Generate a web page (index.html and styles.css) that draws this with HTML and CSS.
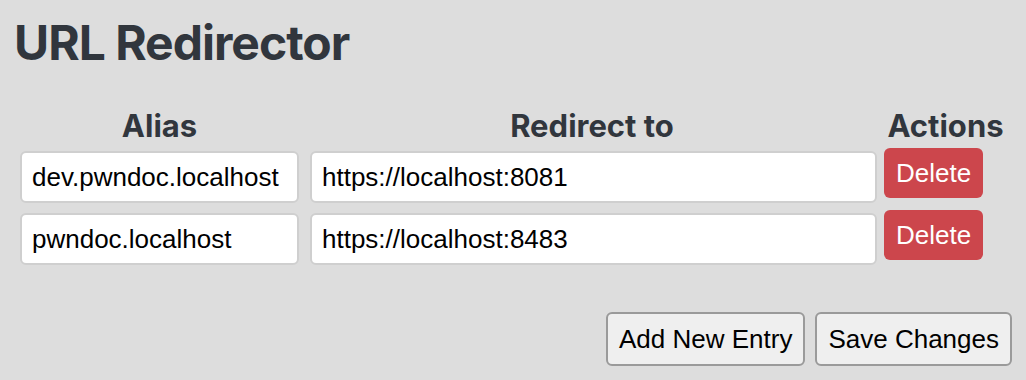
FILE: index.html
```html
<!DOCTYPE html>
<html lang="en">
<head>
<meta charset="UTF-8">
<meta name="viewport" content="width=device-width, initial-scale=1.0">
<title>URL Redirector</title>
<link rel="stylesheet" href="styles.css">
</head>
<body>

<h1>URL Redirector</h1>

<table id="tablaRedirects">
    <colgroup>
        <col class="col-alias">
        <col class="col-target">
        <col class="col-actions">
    </colgroup>
    <thead>
        <tr>
            <th>Alias</th>
            <th>Redirect to</th>
            <th>Actions</th>
        </tr>
    </thead>
    <tbody>
        <tr>
            <td class="cell-alias"><input type="text" value="dev.pwndoc.localhost"></td>
            <td class="cell-target"><input type="text" value="https://localhost:8081"></td>
            <td class="cell-actions"><button class="btn-delete">Delete</button></td>
        </tr>
        <tr>
            <td class="cell-alias"><input type="text" value="pwndoc.localhost"></td>
            <td class="cell-target"><input type="text" value="https://localhost:8483"></td>
            <td class="cell-actions"><button class="btn-delete">Delete</button></td>
        </tr>
    </tbody>
</table>

<div class="botones">
    <button class="btn">Add New Entry</button>
    <button class="btn">Save Changes</button>
</div>

</body>
</html>
```

FILE: styles.css
```css
body {
    font-family: "Liberation Sans", Arial, sans-serif;
    background-color: #dddddd;
    margin: 0;
    padding: 0 14px;
}
h1 {
    font-family: Inter, "Liberation Sans", sans-serif;
    font-size: 48px;
    font-weight: 700;
    letter-spacing: -1px;
    color: #31363d;
    margin: 13px 0 31px;
}
table {
    width: 100%;
    table-layout: fixed;
    border-collapse: collapse;
}
.col-alias {
    width: 291px;
}
.col-target {
    width: 574px;
}
th {
    font-family: Inter, "Liberation Sans", sans-serif;
    font-size: 31px;
    font-weight: 700;
    color: #31363d;
    text-align: center;
    padding: 4px 0 4px;
    white-space: nowrap;
}
td {
    vertical-align: top;
    padding: 0 0 7px;
}
.cell-alias {
    padding-left: 6px;
    padding-right: 6px;
}
.cell-target {
    padding-left: 5px;
    padding-right: 2px;
}
.cell-actions {
    padding-left: 5px;
}
input[type="text"] {
    box-sizing: border-box;
    width: 100%;
    height: 52px;
    margin-top: 3px;
    padding: 0 10px;
    font-family: "Liberation Sans", Arial, sans-serif;
    font-size: 26px;
    color: #000;
    background-color: #fff;
    border: 2px solid #cfcfcf;
    border-radius: 6px;
}
.btn-delete {
    height: 50px;
    padding: 0 12px;
    font-family: "Liberation Sans", Arial, sans-serif;
    font-size: 26px;
    color: #fff;
    background-color: #cc464c;
    border: none;
    border-radius: 6px;
    cursor: pointer;
}
.botones {
    display: flex;
    justify-content: flex-end;
    gap: 10px;
    margin-top: 40px;
}
.btn {
    height: 54px;
    padding: 0 11px;
    font-family: "Liberation Sans", Arial, sans-serif;
    font-size: 26px;
    color: #000;
    background-color: #efefef;
    border: 2px solid #9a9a9a;
    border-radius: 6px;
    cursor: pointer;
}
```
